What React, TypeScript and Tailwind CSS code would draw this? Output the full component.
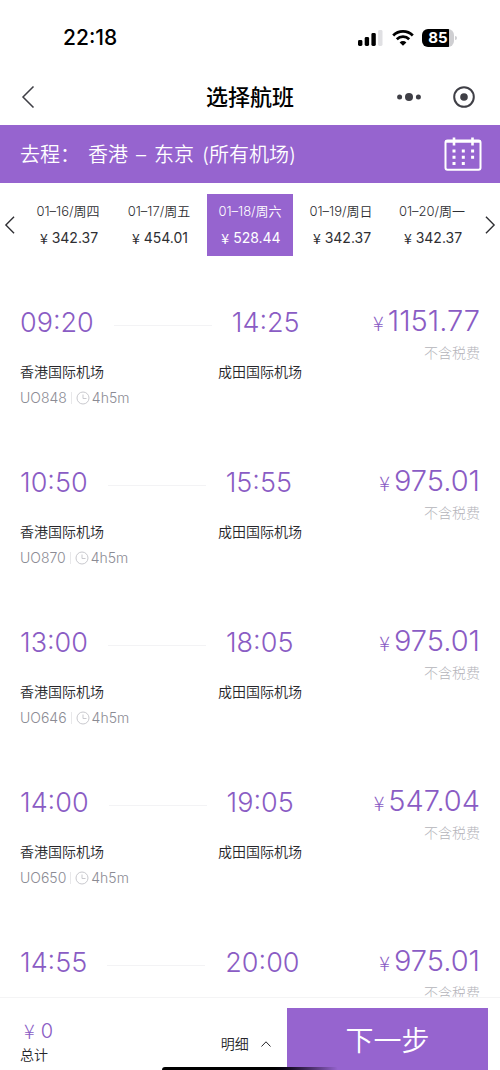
import { useState } from 'react';

const days = [
  { date: '01–16/周四', price: '342.37' },
  { date: '01–17/周五', price: '454.01' },
  { date: '01–18/周六', price: '528.44' },
  { date: '01–19/周日', price: '342.37' },
  { date: '01–20/周一', price: '342.37' },
];

const flights = [
  { no: 'UO848', from: '09:20', to: '14:25', price: '1151.77' },
  { no: 'UO870', from: '10:50', to: '15:55', price: '975.01' },
  { no: 'UO646', from: '13:00', to: '18:05', price: '975.01' },
  { no: 'UO650', from: '14:00', to: '19:05', price: '547.04' },
  { no: 'UO622', from: '14:55', to: '20:00', price: '975.01' },
];

function Chevron({ points, className }: { points: string; className: string }) {
  return (
    <svg viewBox="0 0 12 22" className={className} fill="none" stroke="currentColor" strokeWidth="1.5">
      <polyline points={points} />
    </svg>
  );
}

function StatusBar() {
  return (
    <div className="flex h-[68px] shrink-0 items-center justify-between pt-2 pr-[43px] pl-[63px] text-black">
      <span className="text-[21px] font-medium">22:18</span>
      <div className="flex items-center gap-2">
        <svg width="26" height="18" viewBox="0 0 26 18" fill="currentColor">
          <rect x="0" y="11" width="4.4" height="6" rx="1.4" />
          <rect x="6.7" y="8" width="4.4" height="9" rx="1.4" />
          <rect x="13.4" y="4" width="4.4" height="13" rx="1.4" />
          <rect x="20.1" y="1" width="4.4" height="16" rx="1.4" fill="#e0e0e3" />
        </svg>
        <svg width="22" height="18" viewBox="0 0 22 18" fill="none" stroke="currentColor" strokeWidth="2.8">
          <path d="M1.2 6.4a14 14 0 0 1 19.6 0" />
          <path d="M4.8 10.2a9 9 0 0 1 12.4 0" />
          <path d="M11 16.8 7.600 13.400a4.900 4.900 0 0 1 6.800 0Z" fill="currentColor" stroke="none" />
        </svg>
        <div className="flex items-center gap-px">
          <div className="flex h-[18px] w-8 items-center justify-center rounded-md bg-linear-to-r from-black from-85% to-[#cfcfd2] to-85% text-[15px] font-bold text-white">
            85
          </div>
          <span className="h-1 w-0.5 rounded-r bg-[#cfcfd2]" />
        </div>
      </div>
    </div>
  );
}

function NavBar() {
  return (
    <header className="grid h-[57px] shrink-0 grid-cols-3 items-center px-[21px] text-[#3f3f46]">
      <button aria-label="返回" className="w-fit">
        <Chevron points="11.5,0.5 1,11 11.5,21.5" className="h-[22px] w-3.5" />
      </button>
      <h1 className="pt-0.5 text-center text-[22px] font-medium whitespace-nowrap text-black">选择航班</h1>
      <div className="flex items-center justify-end gap-8 pr-1">
        <button aria-label="更多">
          <svg width="24" height="10" viewBox="0 0 24 10" fill="currentColor">
            <circle cx="2.6" cy="5" r="2.5" />
            <circle cx="12" cy="5" r="4" />
            <circle cx="21.4" cy="5" r="2.5" />
          </svg>
        </button>
        <button aria-label="关闭">
          <svg width="22" height="22" viewBox="0 0 22 22" fill="none">
            <circle cx="11" cy="11" r="9.8" stroke="currentColor" strokeWidth="2" />
            <circle cx="11" cy="11" r="3.8" fill="currentColor" />
          </svg>
        </button>
      </div>
    </header>
  );
}

function RouteBar() {
  return (
    <div className="flex h-[58px] shrink-0 items-center justify-between bg-[#9664cf] pr-[18px] pl-5 text-white">
      <p className="flex gap-2 pt-0.5 text-xl font-[350]">
        <span>去程：</span>
        <span>香港</span>
        <span>–</span>
        <span>东京</span>
        <span>(所有机场)</span>
      </p>
      <button aria-label="选择日期">
        <svg width="38" height="34" viewBox="0 0 38 34" fill="none" stroke="currentColor">
          <rect x="1.5" y="3.5" width="35" height="29.300" rx="2" strokeWidth="2" />
          <path d="M1.500 4.500h35" strokeWidth="2.600" />
          <path d="M10 .5v8M28.5 .5v8" strokeWidth="2.600" />
          <path d="M8.5 14h23M8.5 20.300h23M8.5 26.500h13" strokeWidth="3" strokeDasharray="3 6.300" />
        </svg>
      </button>
    </div>
  );
}

function DateStrip() {
  const [selected, setSelected] = useState(2);

  return (
    <div className="flex shrink-0 items-center justify-between px-1 pt-[11px] text-[#2e2e32]">
      <button aria-label="前一天" className="shrink-0">
        <Chevron points="11,2 2,11 11,20" className="h-5 w-[11px]" />
      </button>
      <div className="grid flex-1 grid-cols-5 gap-[5px] px-2.5">
        {days.map((day, i) => (
          <button
            key={day.date}
            onClick={() => setSelected(i)}
            className={
              i === selected
                ? 'flex h-[62px] flex-col items-center bg-[#9664cf] pt-[7px] text-white'
                : 'flex h-[62px] flex-col items-center pt-[7px]'
            }
          >
            <span className="text-[13px] leading-5 font-[350] whitespace-nowrap">{day.date}</span>
            <span className="mt-[7px] flex items-center gap-1 pl-0.5 text-sm leading-5">
              <span className="font-['Noto_Sans_CJK_SC']">¥</span>
              {day.price}
            </span>
          </button>
        ))}
      </div>
      <button aria-label="后一天" className="shrink-0">
        <Chevron points="1,2 10,11 1,20" className="h-5 w-[11px]" />
      </button>
    </div>
  );
}

function FlightRow({ flight }: { flight: (typeof flights)[number] }) {
  return (
    <li className="flex h-40 justify-between px-5 pt-3">
      <div>
        <div className="flex items-center text-[27px] leading-9 font-light text-[#8a5cc4]">
          <span>{flight.from}</span>
          <span className="mx-5 mt-1 h-px w-[98px] bg-[#f3f3f5]" />
          <span>{flight.to}</span>
        </div>
        <div className="mt-[21px] flex text-sm leading-5 font-[350] text-[#26262a]">
          <span className="w-[198px]">香港国际机场</span>
          <span>成田国际机场</span>
        </div>
        <div className="mt-1.5 flex items-center text-sm leading-5 font-light text-[#8b8b94]">
          <span>{flight.no}</span>
          <span className="mx-1 h-3 w-px bg-[#e8e8ea]" />
          <svg width="14" height="14" viewBox="0 0 14 14" fill="none" stroke="#c9c9ce">
            <circle cx="7" cy="7" r="6" />
            <path d="M7 3.5V7.5h3.500" />
          </svg>
          <span className="ml-0.5">4h5m</span>
        </div>
      </div>
      <div className="text-right">
        <p className="flex items-baseline justify-end gap-1 text-[29px] leading-8 font-light text-[#8a5cc4]">
          <span className="font-['Noto_Sans_CJK_SC'] text-xl leading-8">¥</span>
          {flight.price}
        </p>
        <p className="mt-1 text-sm leading-5 font-light text-[#b4b4ba]">不含税费</p>
      </div>
    </li>
  );
}

function Footer() {
  return (
    <footer className="relative flex h-[73px] shrink-0 border-t border-[#f4f4f5] bg-white pt-2.5 pr-3 pl-5">
      <div className="flex-1 pt-[11px]">
        <p className="flex items-center gap-1.5 pl-1 text-xl leading-6 font-light text-[#8a5cc4]">
          <span className="font-['Noto_Sans_CJK_SC']">¥</span>0
        </p>
        <p className="mt-0.5 text-sm leading-5 font-[350] text-[#26262a]">总计</p>
      </div>
      <button className="flex items-center gap-3 px-4 pt-2.5 text-sm font-[350] text-[#26262a]">
        明细
        <svg width="10" height="6" viewBox="0 0 10 6" fill="none" stroke="currentColor">
          <path d="M.5 5.500 5 .8l4.500 4.700" />
        </svg>
      </button>
      <button className="w-[43%] shrink-0 bg-[#9664cf] pt-1 text-[28px] font-[350] text-white">下一步</button>
      <div className="absolute bottom-0 left-1/2 h-[3px] w-44 -translate-x-1/2 rounded-t bg-linear-to-r from-black from-60% to-[#9664cf]" />
    </footer>
  );
}

export default function App() {
  return (
    <div className="flex h-screen flex-col bg-white font-[Inter,'Noto_Sans_CJK_SC',sans-serif]">
      <StatusBar />
      <NavBar />
      <RouteBar />
      <DateStrip />
      <ul className="min-h-0 flex-1 overflow-y-auto pt-[37px] [scrollbar-width:none]">
        {flights.map((flight) => (
          <FlightRow key={flight.no} flight={flight} />
        ))}
      </ul>
      <Footer />
    </div>
  );
}
